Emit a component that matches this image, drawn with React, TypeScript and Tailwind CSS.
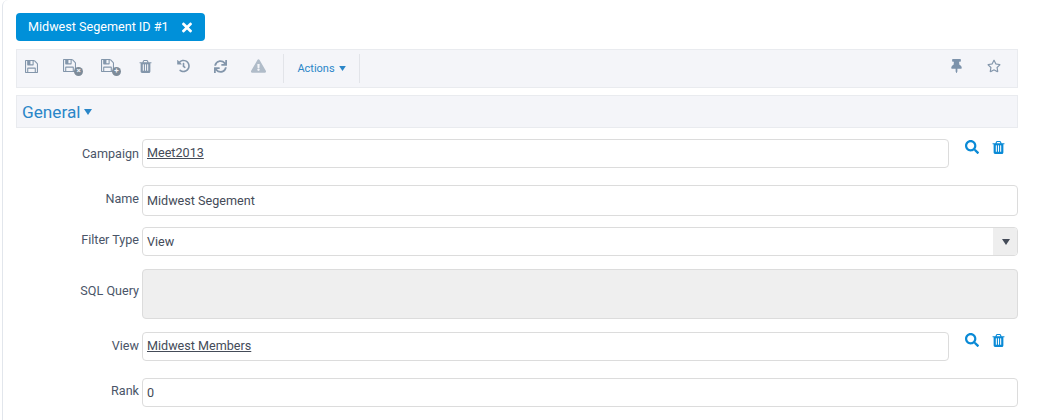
import type { ReactNode } from 'react';
import { FaHistory, FaSync, FaExclamationTriangle, FaThumbtack, FaRegStar, FaSearch, FaTimes } from 'react-icons/fa';

const Trash = ({ className }: { className?: string }) => (
  <svg viewBox="128 128 1536 1536" className={className} fill="currentColor">
    <path d="M704 1376v-704q0-14-9-23t-23-9h-64q-14 0-23 9t-9 23v704q0 14 9 23t23 9h64q14 0 23-9t9-23zm256 0v-704q0-14-9-23t-23-9h-64q-14 0-23 9t-9 23v704q0 14 9 23t23 9h64q14 0 23-9t9-23zm256 0v-704q0-14-9-23t-23-9h-64q-14 0-23 9t-9 23v704q0 14 9 23t23 9h64q14 0 23-9t9-23zm-544-992h448l-48-117q-7-9-17-11h-317q-10 2-17 11zm928 32v64q0 14-9 23t-23 9h-96v948q0 83-47 143.5t-113 60.5h-832q-66 0-113-58.5t-47-141.5v-952h-96q-14 0-23-9t-9-23v-64q0-14 9-23t23-9h309l70-167q15-37 54-63t79-26h320q40 0 79 26t54 63l70 167h309q14 0 23 9t9 23z" />
  </svg>
);

const Floppy = ({ className }: { className?: string }) => (
  <svg viewBox="128 128 1536 1536" className={className} fill="currentColor">
    <path d="M512 1536h768v-384h-768v384zm896 0h128v-896q0-14-10-38.5t-20-34.5l-281-281q-10-10-34-20t-39-10v416q0 40-28 68t-68 28h-576q-40 0-68-28t-28-68v-416h-128v1280h128v-416q0-40 28-68t68-28h832q40 0 68 28t28 68v416zm-384-928v-320q0-13-9.5-22.5t-22.5-9.5h-192q-13 0-22.5 9.5t-9.5 22.5v320q0 13 9.5 22.5t22.5 9.5h192q13 0 22.5-9.5t9.5-22.5zm640 32v928q0 40-28 68t-68 28h-1344q-40 0-68-28t-28-68v-1344q0-40 28-68t68-28h928q40 0 88 20t76 48l280 280q28 28 48 76t20 88z" />
  </svg>
);

const Caret = ({ className }: { className?: string }) => (
  <svg viewBox="0 0 8 6" className={className} fill="currentColor">
    <path d="M0 0h8L4 6z" />
  </svg>
);

const SaveBadge = ({ plus }: { plus?: boolean }) => (
  <span className="relative block w-[21px] h-[18px]">
    <Floppy className="w-[13px] h-[13px] text-[#8396ab]" />
    <span className="absolute left-[11px] top-[8px] w-[9px] h-[9px] rounded-full bg-[#7d8b99] flex items-center justify-center text-[#f4f5f9] text-[8px] leading-none font-bold">
      {plus ? '+' : '×'}
    </span>
  </span>
);

const Label = ({ children, className = '' }: { children: ReactNode; className?: string }) => (
  <div className={`w-[126px] pr-[3px] text-right text-[12.6px] leading-[18px] text-[#4a5568] ${className}`}>{children}</div>
);

const box = 'border border-[#dcdcdc] rounded-[4px] h-[29px] px-1 text-[12.6px] text-[#444b58] flex items-center';

const LookupActions = () => (
  <div className="w-[69px] pl-[16px] pt-[1px] flex items-start gap-[13px] text-[#0a8ad6]">
    <FaSearch className="w-[14px] h-[14px]" />
    <Trash className="w-[13px] h-[13px] mt-[1px]" />
  </div>
);

export default function App() {
  return (
    <div className="h-[420px] overflow-hidden bg-white border-l-[1px] border-[#e2e6ec] ml-[2px] rounded-tl-md pl-[13px] pr-[23px] pt-[13px] font-['Roboto',sans-serif]">
      <div className="w-[189px] h-[28px] rounded-[4px] bg-[#0090d9] text-white flex items-center pl-3 text-[12.6px]">
        <span>Midwest Segement ID #1</span>
        <FaTimes className="w-[10px] h-[15px] ml-[13px]" />
      </div>

      <div className="mt-2 h-[39px] border border-[#e9ebef] bg-[#f4f5f9] flex items-center">
        <div className="flex items-center h-[29px] pl-[8px] text-[#8396ab]">
          <Floppy className="w-[13px] h-[13px] mr-[25px] -mt-[5px]" />
          <div className="w-[38px] -mt-[2px]"><SaveBadge /></div>
          <div className="w-[38px] -mt-[2px]"><SaveBadge plus /></div>
          <Trash className="w-[13px] h-[13px] mr-[25px] -mt-[5px]" />
          <FaHistory className="w-[13px] h-[14px] mr-[24px] -mt-[5px]" />
          <FaSync className="w-[13px] h-[13px] mr-[24px] -mt-[5px]" />
          <FaExclamationTriangle className="w-[15px] h-[14px] text-[#b0bcc9] mr-[17px] -mt-[5px]" />
        </div>
        <div className="h-[29px] border-x border-[#e2e4e9] w-[77px] pt-[1px] flex items-center justify-center gap-[4px] text-[11px] text-[#2a86c8]">
          <span>Actions</span>
          <Caret className="w-[7px] h-[5px] -mt-[2px]" />
        </div>
        <div className="ml-auto flex items-center gap-[25px] pr-[16px] text-[#8396ab] -mt-[6px]">
          <FaThumbtack className="w-[11px] h-[14px] text-[#7d93ab]" />
          <FaRegStar className="w-[14px] h-[14px]" />
        </div>
      </div>

      <div className="mt-[7px] h-[33px] border border-[#e9ebef] bg-[#f4f5f9] flex items-center pl-[5px] pt-[2px] text-[17.2px] text-[#2a86c8]">
        <span>General</span>
        <Caret className="w-[8px] h-[6px] ml-[4px] -mt-[2px]" />
      </div>

      <div className="mt-[11px] flex">
        <Label className="pt-[6px]">Campaign</Label>
        <div className={`${box} flex-1 items-start pt-[4px]`}><span className="underline">Meet2013</span></div>
        <LookupActions />
      </div>

      <div className="mt-[17px] flex">
        <Label className="pt-[5px]">Name</Label>
        <div className={`${box} flex-1 h-[31px] pt-[1px]`}>Midwest Segement</div>
      </div>

      <div className="mt-[11px] flex">
        <Label className="pt-[4px]">Filter Type</Label>
        <div className={`${box} flex-1 pr-0 overflow-hidden`}>
          <span className="flex-1 pt-[1px]">View</span>
          <span className="w-[25px] h-[29px] -mr-px bg-[#eeeeee] flex items-center justify-center text-[#444b58]">
            <Caret className="w-[8px] h-[6px]" />
          </span>
        </div>
      </div>

      <div className="mt-[13px] flex">
        <Label className="pt-[13px]">SQL Query</Label>
        <div className="flex-1 h-[50px] border border-[#dcdcdc] rounded-[4px] bg-[#efefef]" />
      </div>

      <div className="mt-[13px] flex">
        <Label className="pt-[5px]">View</Label>
        <div className={`${box} flex-1 items-start pt-[4px]`}><span className="underline">Midwest Members</span></div>
        <LookupActions />
      </div>

      <div className="mt-[17px] flex">
        <Label className="pt-[4px]">Rank</Label>
        <div className={`${box} flex-1 pt-[1px]`}>0</div>
      </div>
    </div>
  );
}
